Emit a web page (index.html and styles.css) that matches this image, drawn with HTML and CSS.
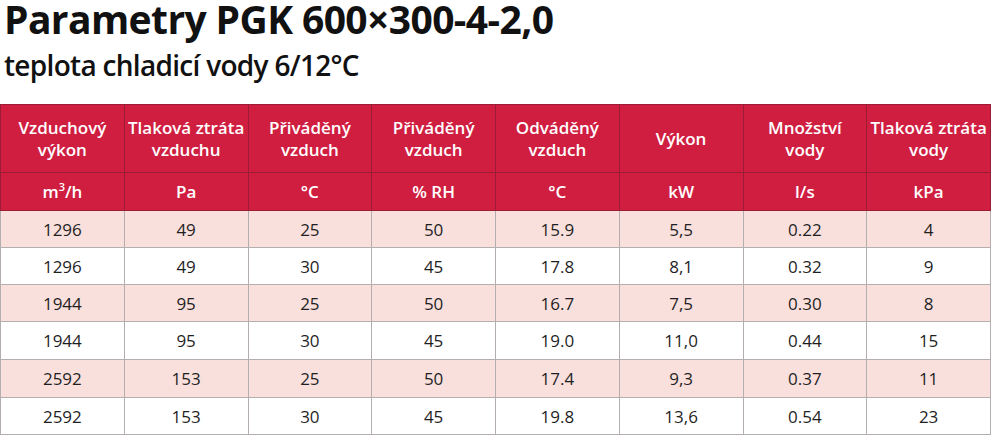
FILE: index.html
```html
<!DOCTYPE html>
<html lang="cs">
<head>
<meta charset="utf-8">
<title>Parametry PGK 600×300-4-2,0</title>
<link rel="stylesheet" href="styles.css">
</head>
<body>
<header class="heading">
  <h1 class="title">Parametry PGK 600×300-4-2,0</h1>
  <p class="subtitle">teplota chladicí vody 6/12°C</p>
</header>
<table class="params">
  <thead>
    <tr class="head-names">
      <th>Vzduchový<br>výkon</th>
      <th>Tlaková ztráta<br>vzduchu</th>
      <th>Přiváděný<br>vzduch</th>
      <th>Přiváděný<br>vzduch</th>
      <th>Odváděný<br>vzduch</th>
      <th>Výkon</th>
      <th>Množství<br>vody</th>
      <th>Tlaková ztráta<br>vody</th>
    </tr>
    <tr class="head-units">
      <th>m<sup>3</sup>/h</th>
      <th>Pa</th>
      <th>°C</th>
      <th>% RH</th>
      <th>°C</th>
      <th>kW</th>
      <th>l/s</th>
      <th>kPa</th>
    </tr>
  </thead>
  <tbody>
    <tr class="odd"><td>1296</td><td>49</td><td>25</td><td>50</td><td>15.9</td><td>5,5</td><td>0.22</td><td>4</td></tr>
    <tr><td>1296</td><td>49</td><td>30</td><td>45</td><td>17.8</td><td>8,1</td><td>0.32</td><td>9</td></tr>
    <tr class="odd"><td>1944</td><td>95</td><td>25</td><td>50</td><td>16.7</td><td>7,5</td><td>0.30</td><td>8</td></tr>
    <tr class="tall"><td>1944</td><td>95</td><td>30</td><td>45</td><td>19.0</td><td>11,0</td><td>0.44</td><td>15</td></tr>
    <tr class="odd tall"><td>2592</td><td>153</td><td>25</td><td>50</td><td>17.4</td><td>9,3</td><td>0.37</td><td>11</td></tr>
    <tr><td>2592</td><td>153</td><td>30</td><td>45</td><td>19.8</td><td>13,6</td><td>0.54</td><td>23</td></tr>
  </tbody>
</table>
</body>
</html>
```
FILE: styles.css
```css
html, body {
  margin: 0;
  padding: 0;
  background: #ffffff;
}
body {
  font-family: "Open Sans", "Liberation Sans", sans-serif;
  color: #1a1a1a;
  width: 992px;
  height: 435px;
  overflow: hidden;
}
.heading {
  display: flex;
  flex-direction: column;
  align-items: flex-start;
  height: 104px;
  box-sizing: border-box;
  padding: 0 0 0 4px;
}
.title {
  margin: -4px 0 0 0;
  font-size: 39px;
  font-weight: 700;
  line-height: 46px;
  letter-spacing: -0.6px;
  color: #111;
}
.subtitle {
  margin: 7px 0 0 0;
  font-size: 28px;
  font-weight: 600;
  line-height: 32px;
  letter-spacing: -0.7px;
  color: #111;
}
.params {
  width: 991px;
  border-collapse: collapse;
  table-layout: fixed;
  border-top: 1px solid #a9a9a9;
}
.params th {
  background: #d01e41;
  color: #ffffff;
  font-weight: 600;
  font-size: 17px;
  line-height: 22px;
  border: 1px solid #9c1c35;
  padding: 0;
  text-align: center;
  white-space: nowrap;
  letter-spacing: 0;
}
.head-names th {
  height: 67px;
}
.head-units th {
  height: 37px;
}
.params sup {
  font-size: 11px;
  line-height: 0;
  vertical-align: 7px;
}
.params td {
  height: 36px;
  padding: 0;
  text-align: center;
  font-size: 17px;
  border: 1px solid #b4aeae;
  color: #1f1f1f;
}
.params tr.tall td {
  height: 37px;
}
.params tr.odd td {
  background: #f9e0dd;
}
```
